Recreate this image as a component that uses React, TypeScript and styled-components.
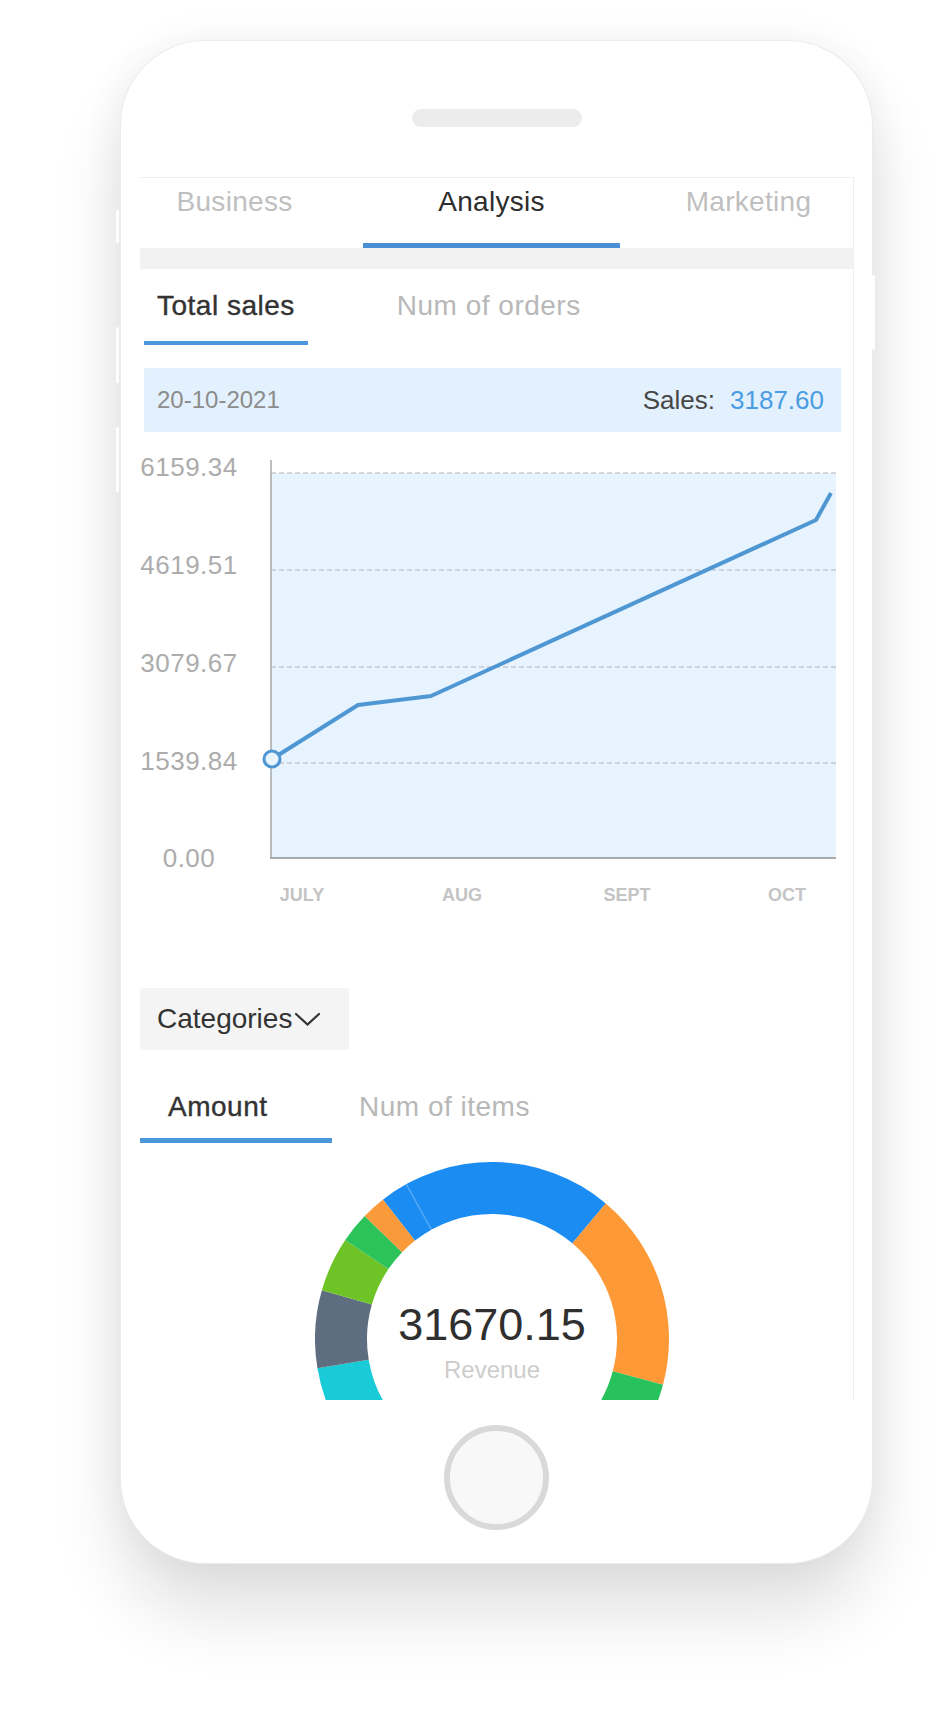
import React from 'react';
import styled, { createGlobalStyle } from 'styled-components';

const GlobalStyle = createGlobalStyle`
    html, body {
        margin: 0;
        padding: 0;
        background: #ffffff;
    }
    body {
        font-family: 'Liberation Sans', Arial, sans-serif;
    }
    * {
        box-sizing: border-box;
    }
`;

const Page = styled.div`
    width: 952px;
    height: 1724px;
    padding: 41px 0 0 121px;
    overflow: hidden;
`;

const Phone = styled.div`
    position: relative;
    width: 751px;
    height: 1522px;
    border-radius: 84px;
    background: #ffffff;
    box-shadow: 0 0 0 1px #ebebeb, 0 50px 70px rgba(0, 0, 0, 0.12), 0 0 40px rgba(0, 0, 0, 0.06);
    display: flex;
    flex-direction: column;
    align-items: center;
`;

const SideKey = styled.span<{ $side: 'left' | 'right'; $top: number; $height: number }>`
    position: absolute;
    ${props => (props.$side === 'left' ? 'left: -5px;' : 'right: -3px;')}
    top: ${props => props.$top}px;
    width: 3px;
    height: ${props => props.$height}px;
    background: #ffffff;
    border-radius: 2px;
`;

const Speaker = styled.div`
    margin-top: 68px;
    width: 170px;
    height: 18px;
    border-radius: 9px;
    background: #ececec;
`;

const Screen = styled.div`
    align-self: flex-start;
    margin: 50px 0 0 19px;
    width: 714px;
    height: 1223px;
    overflow: hidden;
    border-top: 1px solid #f0f0f0;
    border-right: 1px solid #efefef;
    display: flex;
    flex-direction: column;
    align-items: flex-start;
`;

const HomeButton = styled.div`
    margin-top: 25px;
    width: 105px;
    height: 105px;
    border-radius: 50%;
    border: 6px solid #d9d9d9;
    background: #f8f8f8;
`;

const MainTabs = styled.div`
    display: grid;
    grid-template-columns: repeat(3, 257px);
    margin-left: -34px;
    height: 70px;
    flex-shrink: 0;
`;

const MainTab = styled.div<{ $active?: boolean }>`
    display: flex;
    flex-direction: column;
    align-items: center;
    font-size: 28px;
    line-height: 48px;
    letter-spacing: 0.3px;
    color: ${props => (props.$active ? '#2d2d2d' : '#bfbfbf')};

    &::after {
        content: '';
        margin-top: auto;
        width: 100%;
        height: 5px;
        background: ${props => (props.$active ? '#4a8fd6' : 'transparent')};
    }
`;

const Band = styled.div`
    width: 100%;
    height: 21px;
    flex-shrink: 0;
    background: #f2f2f2;
`;

const SubTabs = styled.div<{ $gap: number; $offset: number; $height: number }>`
    display: flex;
    gap: ${props => props.$gap}px;
    margin-left: ${props => props.$offset}px;
    height: ${props => props.$height}px;
    flex-shrink: 0;
`;

const SubTab = styled.div<{ $active?: boolean; $width?: number; $pad: string; $top: number; $barGap: number; $bar: number }>`
    display: flex;
    flex-direction: column;
    align-items: flex-start;
    ${props => (props.$width ? `width: ${props.$width}px;` : '')}
    padding: ${props => props.$top}px ${props => props.$pad} 0;
    font-size: 28px;
    line-height: 40px;
    letter-spacing: 0.5px;
    white-space: nowrap;
    color: ${props => (props.$active ? '#333333' : '#b8b8b8')};
    -webkit-text-stroke: ${props => (props.$active ? '0.4px #333333' : '0')};

    &::after {
        content: '';
        align-self: stretch;
        margin: ${props => props.$barGap}px calc(-1 * ${props => props.$pad}) 0;
        height: ${props => props.$bar}px;
        background: ${props => (props.$active ? '#4a97de' : 'transparent')};
    }
`;

const DateBar = styled.div`
    margin: 23px 0 0 4px;
    width: 697px;
    height: 64px;
    flex-shrink: 0;
    background: #e3f0fd;
    border-radius: 2px;
    display: flex;
    align-items: center;
    justify-content: space-between;
    padding: 0 17px 0 13px;
`;

const DateText = styled.span`
    font-size: 24px;
    color: #8c8c8c;
`;

const SalesText = styled.span`
    font-size: 26px;
    color: #474747;
`;

const SalesValue = styled.span`
    margin-left: 15px;
    color: #4a9de3;
`;

const ChartSvg = styled.svg`
    display: block;
    flex-shrink: 0;
`;

const AxisValue = styled.text`
    font-family: 'Liberation Sans', Arial, sans-serif;
    font-size: 26px;
    letter-spacing: 0.5px;
    fill: #acacac;
    text-anchor: middle;
`;

const MonthLabel = styled.text`
    font-family: 'Liberation Sans', Arial, sans-serif;
    font-size: 18px;
    font-weight: 700;
    fill: #c4c4c4;
    text-anchor: middle;
`;

const CategoryButton = styled.div`
    margin-top: 66px;
    width: 209px;
    height: 62px;
    flex-shrink: 0;
    background: #f4f4f4;
    border-radius: 3px;
    display: flex;
    align-items: center;
    gap: 2px;
    padding-left: 17px;
    font-size: 28px;
    color: #333333;
`;

const DonutWrap = styled.div`
    position: relative;
    margin: 19px 0 0 175px;
    width: 354px;
    height: 354px;
    flex-shrink: 0;
`;

const DonutCenter = styled.div`
    position: absolute;
    inset: 0;
    display: flex;
    flex-direction: column;
    align-items: center;
    padding-top: 140px;
    gap: 9px;
`;

const DonutValue = styled.span`
    font-size: 45px;
    line-height: 46px;
    color: #2f2f2f;
`;

const DonutCaption = styled.span`
    font-size: 24px;
    line-height: 26px;
    color: #cccccc;
`;

const gridLines = [41, 138, 235, 331];
const axisValues = [
    { label: '6159.34', y: 35 },
    { label: '4619.51', y: 133 },
    { label: '3079.67', y: 231 },
    { label: '1539.84', y: 329 },
    { label: '0.00', y: 426 },
];
const months = [
    { label: 'JULY', x: 162 },
    { label: 'AUG', x: 322 },
    { label: 'SEPT', x: 487 },
    { label: 'OCT', x: 647 },
];
const salesPoints = '132,327 218,273 291,264 676,88 691,61';

const segments = [
    { from: -135, to: -99.5, color: '#18cbd6' },
    { from: -99.5, to: -74, color: '#5e6d80' },
    { from: -74, to: -56, color: '#6ec427' },
    { from: -56, to: -46, color: '#2cc35b' },
    { from: -46, to: -38, color: '#fb9a3a' },
    { from: -38, to: 40, color: '#1a8cf2' },
    { from: 40, to: 105, color: '#fd9936' },
    { from: 105, to: 140, color: '#27c25c' },
    { from: 140, to: 185, color: '#f0616a' },
    { from: 185, to: 225, color: '#9a6ce0' },
];

const R_OUT = 177;
const R_IN = 125;

const polar = (r: number, deg: number) => {
    const a = (deg * Math.PI) / 180;
    return [R_OUT + r * Math.sin(a), R_OUT - r * Math.cos(a)];
};

const arcPath = (from: number, to: number) => {
    const [x1, y1] = polar(R_OUT, from);
    const [x2, y2] = polar(R_OUT, to);
    const [x3, y3] = polar(R_IN, to);
    const [x4, y4] = polar(R_IN, from);
    const large = to - from > 180 ? 1 : 0;
    return `M${x1} ${y1} A${R_OUT} ${R_OUT} 0 ${large} 1 ${x2} ${y2} L${x3} ${y3} A${R_IN} ${R_IN} 0 ${large} 0 ${x4} ${y4} Z`;
};

const SalesChart = () => (
    <ChartSvg width={714} height={490} viewBox="0 0 714 490">
        <rect x={131} y={41} width={565} height={385} fill="#e7f3fe" />
        {gridLines.map(y => (
            <line key={y} x1={131} x2={696} y1={y} y2={y} stroke="#b3b3b3" strokeWidth={1.2} strokeDasharray="5 3" />
        ))}
        <line x1={131} x2={131} y1={28} y2={427} stroke="#a9a9a9" strokeWidth={1.5} />
        <line x1={130} x2={696} y1={426} y2={426} stroke="#a9a9a9" strokeWidth={2} />
        {axisValues.map(v => (
            <AxisValue key={v.label} x={49} y={v.y + 9}>
                {v.label}
            </AxisValue>
        ))}
        {months.map(m => (
            <MonthLabel key={m.label} x={m.x} y={469}>
                {m.label}
            </MonthLabel>
        ))}
        <polyline points={salesPoints} fill="none" stroke="#4f97d3" strokeWidth={4} strokeLinejoin="round" />
        <circle cx={132} cy={327} r={8} fill="#eaf4fd" stroke="#4f97d3" strokeWidth={3} />
    </ChartSvg>
);

const RevenueDonut = () => {
    const [lx1, ly1] = polar(R_OUT, -29);
    const [lx2, ly2] = polar(R_IN, -29);
    return (
        <DonutWrap>
            <svg width={354} height={354} viewBox="0 0 354 354">
                {segments.map(s => (
                    <path key={s.from} d={arcPath(s.from, s.to)} fill={s.color} />
                ))}
                <line x1={lx1} y1={ly1} x2={lx2} y2={ly2} stroke="rgba(255,255,255,0.25)" strokeWidth={1.5} />
            </svg>
            <DonutCenter>
                <DonutValue>31670.15</DonutValue>
                <DonutCaption>Revenue</DonutCaption>
            </DonutCenter>
        </DonutWrap>
    );
};

const Chevron = () => (
    <svg width={27} height={15} viewBox="0 0 27 15">
        <polyline points="2,2 13.5,12.5 25,2" fill="none" stroke="#333" strokeWidth={2.2} strokeLinecap="round" />
    </svg>
);

const App = () => (
    <Page>
        <GlobalStyle />
        <Phone>
            <SideKey $side="left" $top={169} $height={33} />
            <SideKey $side="left" $top={286} $height={56} />
            <SideKey $side="left" $top={386} $height={65} />
            <SideKey $side="right" $top={234} $height={75} />
            <Speaker />
            <Screen>
                <MainTabs>
                    <MainTab>Business</MainTab>
                    <MainTab $active={true}>Analysis</MainTab>
                    <MainTab>Marketing</MainTab>
                </MainTabs>
                <Band />
                <SubTabs $gap={76} $offset={4} $height={76}>
                    <SubTab $active={true} $pad="13px" $top={17} $barGap={15} $bar={4}>
                        Total sales
                    </SubTab>
                    <SubTab $pad="13px" $top={17} $barGap={15} $bar={4}>
                        Num of orders
                    </SubTab>
                </SubTabs>
                <DateBar>
                    <DateText>20-10-2021</DateText>
                    <SalesText>
                        Sales:<SalesValue>3187.60</SalesValue>
                    </SalesText>
                </DateBar>
                <SalesChart />
                <CategoryButton>
                    Categories
                    <Chevron />
                </CategoryButton>
                <SubTabs $gap={27} $offset={0} $height={93}>
                    <SubTab $active={true} $width={192} $pad="28px" $top={37} $barGap={11} $bar={5}>
                        Amount
                    </SubTab>
                    <SubTab $pad="0px" $top={37} $barGap={11} $bar={5}>
                        Num of items
                    </SubTab>
                </SubTabs>
                <RevenueDonut />
            </Screen>
            <HomeButton />
        </Phone>
    </Page>
);

export default App;
